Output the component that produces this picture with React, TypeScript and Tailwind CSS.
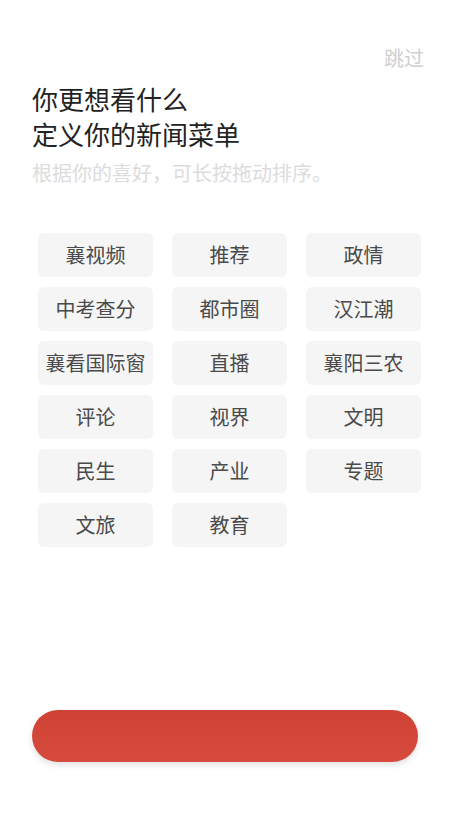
const TAGS = [
  "襄视频", "推荐", "政情",
  "中考查分", "都市圈", "汉江潮",
  "襄看国际窗", "直播", "襄阳三农",
  "评论", "视界", "文明",
  "民生", "产业", "专题",
  "文旅", "教育",
];

export default function App() {
  return (
    <div
      className="w-[459px] h-[816px] bg-white flex flex-col overflow-hidden"
      style={{ fontFamily: '"Noto Sans CJK SC", "Noto Sans", sans-serif' }}
    >
      <div className="flex justify-end pt-[44px] pr-[35px]">
        <span className="text-[20px] leading-[28px] text-[#cfcfcf]">跳过</span>
      </div>

      <div className="px-[32px] pt-[9px]">
        <h1 className="text-[26px] leading-[35px] text-[#222] font-normal">
          你更想看什么
          <br />
          定义你的新闻菜单
        </h1>
        <p className="mt-[8px] text-[20px] leading-[28px] text-[#dcdcdc]">
          根据你的喜好，可长按拖动排序。
        </p>
      </div>

      <div className="grid grid-cols-3 gap-x-[19px] gap-y-[10px] px-[38px] mt-[46px]">
        {TAGS.map((t) => (
          <div
            key={t}
            className="h-[44px] rounded-[6px] bg-[#f5f5f5] flex items-center justify-center text-[20px] text-[#4a4a4a]"
          >
            {t}
          </div>
        ))}
      </div>

      <div className="flex-1" />

      <div className="px-[32px] pb-[54px]">
        <div className="h-[52px] w-[386px] rounded-full bg-gradient-to-b from-[#cd4234] to-[#d64b3d] shadow-[0_3px_6px_rgba(0,0,0,0.12)]" />
      </div>
    </div>
  );
}
